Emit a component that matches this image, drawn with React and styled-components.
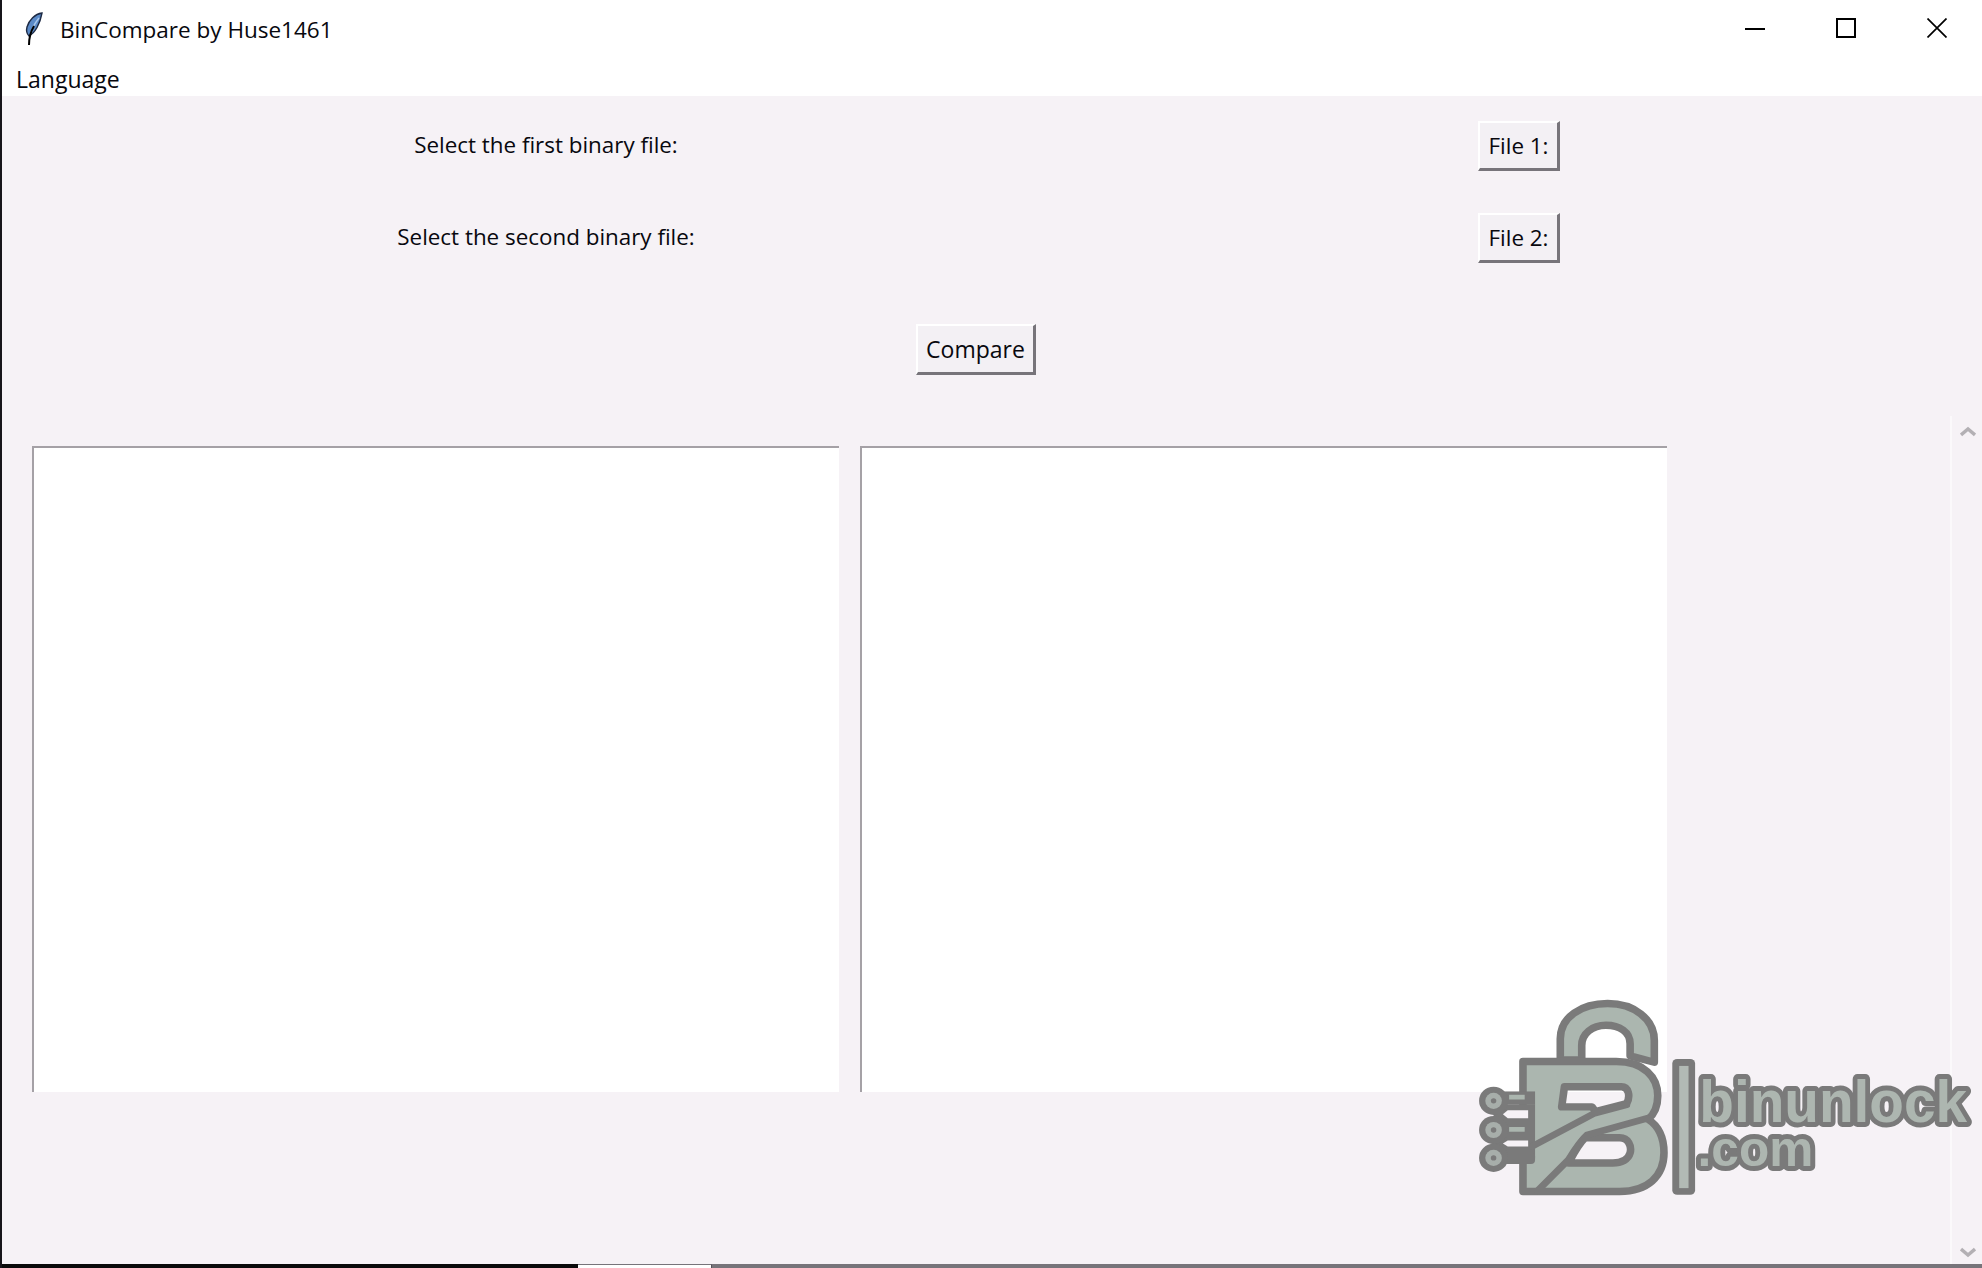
import React from "react";
import styled, { createGlobalStyle } from "styled-components";

const Global = createGlobalStyle`
  html, body { margin: 0; padding: 0; background: #f6f2f6; }
  body { font-family: "Open Sans", "Noto Sans", "Liberation Sans", sans-serif; color: #08080e; overflow: hidden; }
  * { box-sizing: border-box; }
`;

const Window = styled.div`
  position: relative;
  width: 1982px;
  height: 1268px;
  display: flex;
  flex-direction: column;
  border-left: 2px solid #17151a;
  background: #f6f2f6;
  overflow: hidden;
`;

const TitleBar = styled.header`
  height: 52px;
  display: flex;
  align-items: center;
  background: #ffffff;
  padding: 6px 0 0 22px;
`;

const TitleText = styled.span`
  font-size: 22.5px;
  margin-left: 16px;
  flex: 1;
  white-space: nowrap;
`;

const WindowButtons = styled.div`
  display: flex;
`;

const WindowButton = styled.div`
  width: 91px;
  height: 46px;
  display: flex;
  align-items: center;
  justify-content: center;
  margin-top: -2px;
`;

const MenuBar = styled.nav`
  height: 44px;
  display: flex;
  align-items: center;
  background: #ffffff;
  padding: 10px 0 0 14px;
`;

const MenuItem = styled.span`
  font-size: 23px;
`;

const Body = styled.main`
  flex: 1;
  display: flex;
  min-height: 0;
`;

const Content = styled.div`
  flex: 1;
  min-width: 0;
  padding: 25px 0 0 30px;
  display: flex;
  flex-direction: column;
  align-items: stretch;
`;

const FileRow = styled.div`
  display: grid;
  grid-template-columns: 1028px 418px auto;
  align-items: center;
  margin-bottom: ${(p) => p.$gap}px;
`;

const RowLabel = styled.label`
  font-size: 22.4px;
  line-height: 46px;
  height: 48px;
  text-align: center;
  white-space: nowrap;
`;

const TkButton = styled.button`
  height: ${(p) => p.$h}px;
  width: ${(p) => p.$w}px;
  padding: 0 0 1px;
  font: inherit;
  font-size: ${(p) => p.$size || 22.4}px;
  color: #08080e;
  background: #f3f0f4;
  border-style: solid;
  border-width: 2px 3px 3px 2px;
  border-color: #ffffff #77747a #77747a #ffffff;
  grid-column: ${(p) => p.$col || "auto"};
`;

const CompareRow = styled.div`
  display: flex;
  padding-left: 884px;
  margin-bottom: 71px;
`;

const Panes = styled.div`
  display: flex;
  gap: 21px;
`;

const TextPane = styled.div`
  width: 807px;
  height: 646px;
  background: #ffffff;
  border-top: 2px solid #a5a1a6;
  border-left: 2px solid #a5a1a6;
`;

const ScrollBar = styled.aside`
  width: 32px;
  margin-top: 320px;
  padding: 10px 0 6px 8px;
  border-left: 2px solid #fbf9fb;
  display: flex;
  flex-direction: column;
  justify-content: space-between;
`;

const BottomStrip = styled.div`
  height: 4px;
  display: flex;
  flex: none;
`;

const StripPart = styled.div`
  width: ${(p) => p.$w};
  flex: ${(p) => (p.$grow ? 1 : "none")};
  background: ${(p) => p.$bg};
  border-top: ${(p) => (p.$line ? "1px solid #77747a" : "none")};
  border-right: ${(p) => (p.$edge ? "1px solid #55535a" : "none")};
`;

const Watermark = styled.svg`
  position: absolute;
  right: 0;
  bottom: 0;
  width: 542px;
  height: 288px;
  pointer-events: none;
`;

const LogoText = styled.text`
  font-family: "Liberation Sans", Arial, sans-serif;
  font-weight: 700;
  font-size: ${(p) => p.$size}px;
  fill: #adb6b0;
  stroke: #7a7a7a;
  stroke-width: 30px;
  stroke-linejoin: round;
  paint-order: stroke;
`;

const Feather = () => (
  <svg width="20" height="34" viewBox="0 0 20 34">
    <path d="M18 1 C11 2 5 8 3 15 C2 19 3 22 5 24 C11 21 16 12 18 1 Z" fill="#5a8ac8" stroke="#1d2a44" strokeWidth="1.4" />
    <path d="M15 6 C11 11 8 16 7 21" stroke="#a8c6ea" strokeWidth="1.4" fill="none" />
    <path d="M10 14 C7 19 5 26 5 33" stroke="#000" strokeWidth="2" fill="none" />
  </svg>
);

const Chevron = ({ down }) => (
  <svg width="16" height="11" viewBox="0 0 16 11">
    <path d={down ? "M1 2 L8 8 L15 2" : "M1 9 L8 3 L15 9"} fill="none" stroke="#b3b0b4" strokeWidth="3.4" />
  </svg>
);

const GRAY = "#7a7a7a";
const LIGHT = "#abb6af";
const BG = "#f6f2f6";

const Contact = ({ y }) => (
  <g>
    <circle cx="155" cy={y} r="42" fill={GRAY} />
    <circle cx="155" cy={y} r="24" fill="#a7aeaa" />
    <circle cx="155" cy={y} r="8" fill={GRAY} />
  </g>
);

const Slot = ({ y, h }) => (
  <path d={`M182 ${y + h / 2} L196 ${y} H255 V${y + h} H196 Z`} fill={BG} />
);

const Logo = () => (
  <Watermark viewBox="0 0 1568 858" preserveAspectRatio="none">
    <path
      d="M348 238 V175 C348 110 410 70 485 70 C560 70 620 115 620 180 V245 L550 226 V190 C550 155 520 135 480 135 C440 135 410 160 410 195 V238 Z"
      fill={LIGHT}
      stroke={GRAY}
      strokeWidth="22"
      strokeLinejoin="round"
    />
    <path
      fillRule="evenodd"
      d="M240 243 H510 C590 243 630 290 630 345 C630 375 620 400 602 415 C632 435 648 470 648 515 C648 585 600 630 520 630 H240 Z
         M360 318 H525 C545 318 552 345 540 368 L450 392 L440 378 H352 Z
         M420 470 H520 C545 470 555 495 550 515 C545 535 525 545 500 545 H372 C385 520 400 490 420 470 Z"
      fill={LIGHT}
      stroke={GRAY}
      strokeWidth="22"
      strokeLinejoin="round"
    />
    <rect x="155" y="332" width="120" height="40" fill={GRAY} />
    <rect x="155" y="372" width="120" height="160" fill={GRAY} />
    <rect x="155" y="514" width="120" height="34" rx="12" fill={GRAY} />
    <Slot y={388} h={24} />
    <Slot y={478} h={18} />
    <rect x="200" y="342" width="45" height="14" fill={LIGHT} />
    <rect x="200" y="438" width="45" height="14" fill={LIGHT} />
    <path d="M268 495 L445 398 L540 372" fill="none" stroke={GRAY} strokeWidth="20" strokeLinecap="round" />
    <path d="M282 628 L372 535 C390 505 405 480 425 462 L600 412" fill="none" stroke={GRAY} strokeWidth="20" strokeLinecap="round" />
    <Contact y={360} />
    <Contact y={447} />
    <Contact y={530} />
    <rect x="672" y="235" width="66" height="405" rx="14" fill={GRAY} />
    <rect x="692" y="256" width="27" height="364" fill="#b2bab5" />
    <LogoText x="750" y="424" $size="178" textLength="775" lengthAdjust="spacingAndGlyphs">binunlock</LogoText>
    <LogoText x="745" y="553" $size="150" textLength="335" lengthAdjust="spacingAndGlyphs">.com</LogoText>
  </Watermark>
);

export default function App() {
  return (
    <>
      <Global />
      <Window>
        <TitleBar>
          <Feather />
          <TitleText>BinCompare by Huse1461</TitleText>
          <WindowButtons>
            <WindowButton>
              <svg width="20" height="20" viewBox="0 0 20 20"><rect x="0" y="10" width="20" height="2" fill="#000" /></svg>
            </WindowButton>
            <WindowButton>
              <svg width="20" height="20" viewBox="0 0 20 20"><rect x="1" y="1" width="18" height="18" fill="none" stroke="#000" strokeWidth="2" /></svg>
            </WindowButton>
            <WindowButton>
              <svg width="20" height="20" viewBox="0 0 20 20"><path d="M0.5 0.5 L19.5 19.5 M19.5 0.5 L0.5 19.5" stroke="#000" strokeWidth="1.7" /></svg>
            </WindowButton>
          </WindowButtons>
        </TitleBar>
        <MenuBar>
          <MenuItem>Language</MenuItem>
        </MenuBar>
        <Body>
          <Content>
            <FileRow $gap={42}>
              <RowLabel>Select the first binary file:</RowLabel>
              <TkButton $w={82} $h={50} $col="3">File 1:</TkButton>
            </FileRow>
            <FileRow $gap={61}>
              <RowLabel>Select the second binary file:</RowLabel>
              <TkButton $w={82} $h={50} $col="3">File 2:</TkButton>
            </FileRow>
            <CompareRow>
              <TkButton $w={120} $h={51} $size={23}>Compare</TkButton>
            </CompareRow>
            <Panes>
              <TextPane />
              <TextPane />
            </Panes>
          </Content>
          <ScrollBar>
            <Chevron />
            <Chevron down />
          </ScrollBar>
        </Body>
        <BottomStrip>
          <StripPart $w="576px" $bg="#0a0a0a" />
          <StripPart $w="134px" $bg="#ffffff" $line $edge />
          <StripPart $grow $bg="#77747a" />
        </BottomStrip>
        <Logo />
      </Window>
    </>
  );
}
